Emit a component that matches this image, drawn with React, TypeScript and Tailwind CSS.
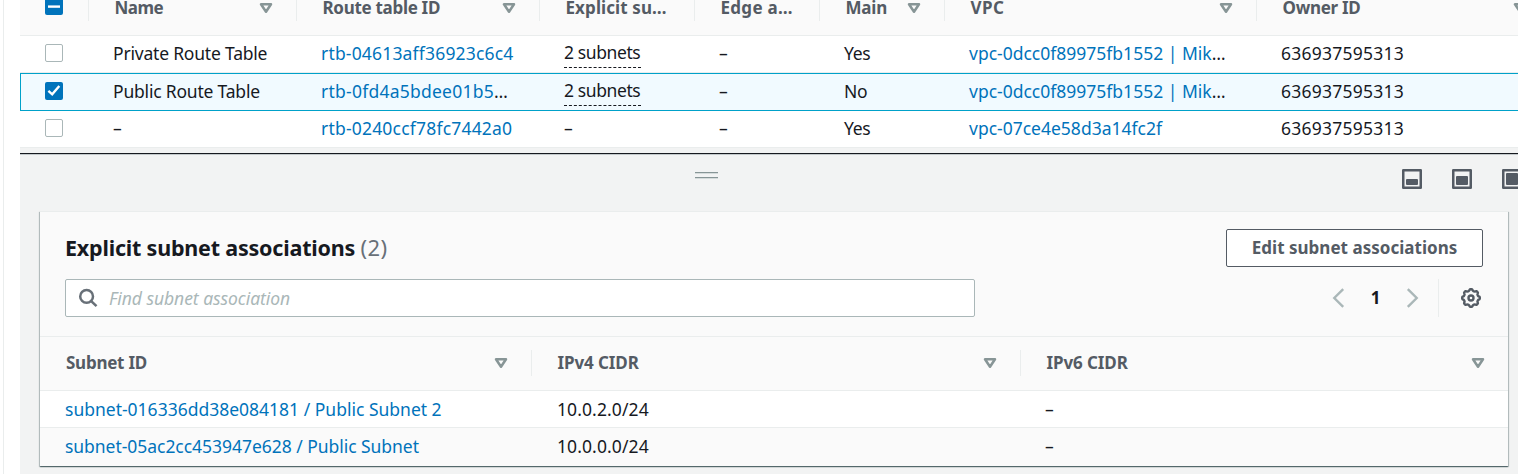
import type { ReactNode } from "react";

function SortIcon() {
  return (
    <svg viewBox="0 0 16 16" className="h-5 w-5 shrink-0" fill="none" stroke="#879596" strokeWidth="2" strokeLinejoin="round">
      <path d="M4 5h8l-4 6-4-6z" />
    </svg>
  );
}

function PanelSizeIcon({ y, height }: { y: number; height: number }) {
  return (
    <svg viewBox="0 0 20 20" className="h-5 w-5 shrink-0" fill="none">
      <rect x="1.25" y="1.25" width="17.5" height="17.5" stroke="#545b64" strokeWidth="2.5" strokeLinejoin="round" />
      <rect x="4" y={y} width="12" height={height} rx="1" fill="#545b64" />
    </svg>
  );
}

function gearPath() {
  const points: string[] = [];
  for (let i = 0; i < 96; i++) {
    const a = (i / 96) * Math.PI * 2;
    const r = 8.05 + 0.8 * Math.tanh(2 * Math.cos(8 * a));
    points.push(`${(10 + r * Math.sin(a)).toFixed(2)} ${(10 - r * Math.cos(a)).toFixed(2)}`);
  }
  return `M${points.join("L")}z`;
}

function GearIcon() {
  return (
    <svg viewBox="0 0 20 20" className="h-5 w-5 shrink-0" fill="none" stroke="#545b64" strokeWidth="2.4">
      <path d={gearPath()} strokeLinejoin="round" />
      <circle cx="10" cy="10" r="2.5" />
    </svg>
  );
}

function Checkbox({ state }: { state: "off" | "on" | "mixed" }) {
  if (state === "off") {
    return <span className="block h-[18px] w-[18px] rounded-[2px] border border-[#aab7b8] bg-white" />;
  }
  return (
    <span className="block h-[18px] w-[18px] rounded-[2px] bg-[#0073bb]">
      <svg viewBox="0 0 18 18" className="block h-[18px] w-[18px]" fill="none" stroke="#fff" strokeWidth="2.4">
        {state === "on" ? <path d="M3.4 8.9 7.2 12.3 14.3 4" /> : <path d="M3 9.6h12" />}
      </svg>
    </span>
  );
}

function HeadCell({ label, tracking, sort = true, divider = true }: { label: string; tracking: string; sort?: boolean; divider?: boolean }) {
  return (
    <div className={`flex h-[26px] items-center justify-between pl-[25.5px] pr-5 ${divider ? "border-r border-[#eaeded]" : ""}`}>
      <span className={`text-[17px] font-bold leading-4 text-[#545b64] ${tracking}`}>{label}</span>
      {sort && <SortIcon />}
    </div>
  );
}

const topGrid = "grid grid-cols-[69px_208px_243px_155px_125px_125px_312px_293px] w-[1530px]";
const cardGrid = "grid grid-cols-[492px_489px_487px]";

type Route = {
  name: string;
  id: string;
  idTracking: string;
  nameTracking: string;
  idCut?: boolean;
  subnets?: boolean;
  main: string;
  mainTracking: string;
  vpc: string;
  vpcTracking: string;
  vpcCut?: boolean;
};

const routes: Route[] = [
  { name: "Private Route Table", nameTracking: "tracking-[-0.2px]", id: "rtb-04613aff36923c6c4", idTracking: "tracking-[0.18px]", subnets: true, main: "Yes", mainTracking: "tracking-[-0.3px]", vpc: "vpc-0dcc0f89975fb1552 | Mik", vpcTracking: "tracking-normal", vpcCut: true },
  { name: "Public Route Table", nameTracking: "tracking-[-0.2px]", id: "rtb-0fd4a5bdee01b5", idTracking: "tracking-[0.24px]", idCut: true, subnets: true, main: "No", mainTracking: "tracking-[-0.4px]", vpc: "vpc-0dcc0f89975fb1552 | Mik", vpcTracking: "tracking-normal", vpcCut: true },
  { name: "–", nameTracking: "", id: "rtb-0240ccf78fc7442a0", idTracking: "tracking-[0.2px]", main: "Yes", mainTracking: "tracking-[-0.3px]", vpc: "vpc-07ce4e58d3a14fc2f", vpcTracking: "tracking-normal" },
];

function Cell({ children, className = "" }: { children: ReactNode; className?: string }) {
  return <div className={`pb-0.5 pl-6 whitespace-nowrap ${className}`}>{children}</div>;
}

function RouteRow({ route, index }: { route: Route; index: number }) {
  const selected = index === 1;
  const frame = selected
    ? "h-[38px] border-y border-l border-[#00a1c9] bg-[#f1faff]"
    : "h-[37px] border-b border-[#eaeded] bg-white pl-px";
  return (
    <div className={`${frame} w-[1530px] overflow-hidden`}>
      <div className={`${topGrid} -ml-px h-9 items-center`}>
        <div className={selected ? "pb-[3px] pl-[25px]" : "pb-0.5 pl-[25px]"}>
          <Checkbox state={selected ? "on" : "off"} />
        </div>
        <Cell className={route.nameTracking}>{route.name}</Cell>
        <Cell className={route.idTracking}>
          <span className="text-[#0073bb]">{route.id}</span>
          {route.idCut && "…"}
        </Cell>
        <Cell>
          {route.subnets ? (
            <span className="mt-px block h-7 w-[77px] border-b border-dashed border-[#16191f] leading-6 tracking-[-0.4px]">2 subnets</span>
          ) : (
            "–"
          )}
        </Cell>
        <Cell>–</Cell>
        <Cell className={route.mainTracking}>{route.main}</Cell>
        <Cell className={route.vpcTracking}>
          <span className="text-[#0073bb]">{route.vpc}</span>
          {route.vpcCut && "…"}
        </Cell>
        <Cell className="tracking-[0.25px]">636937595313</Cell>
      </div>
    </div>
  );
}

function RouteTable() {
  return (
    <div className="h-[148px] shrink-0 overflow-hidden">
      <div className="h-9 overflow-hidden border-b border-[#eaeded] bg-[#fafafa]">
        <div className={`${topGrid} -mt-[5px]`}>
          <div className="h-[26px] border-r border-[#eaeded] pl-[25px] pt-0.5">
            <Checkbox state="mixed" />
          </div>
          <HeadCell label="Name" tracking="tracking-[-0.5px]" />
          <HeadCell label="Route table ID" tracking="tracking-[-0.3px]" />
          <HeadCell label="Explicit su…" tracking="tracking-[0.1px]" sort={false} />
          <HeadCell label="Edge a…" tracking="tracking-[0.3px]" sort={false} />
          <HeadCell label="Main" tracking="tracking-[-0.2px]" />
          <HeadCell label="VPC" tracking="tracking-[0.4px]" />
          <HeadCell label="Owner ID" tracking="tracking-[-0.3px]" divider={false} />
        </div>
      </div>
      {routes.map((route, index) => (
        <RouteRow key={route.id} route={route} index={index} />
      ))}
    </div>
  );
}

function SplitBar() {
  return (
    <div className="flex h-[58px] shrink-0 border-t border-[#16191f] shadow-[inset_0_1px_0_#c3c9cb]">
      <div className="ml-[675px] mt-[18px] flex h-[7px] w-[23px] shrink-0 flex-col justify-between">
        <span className="block h-0.5 border-t border-[#879596] bg-[#d5dbdb]" />
        <span className="block h-0.5 border-t border-[#879596] bg-[#d5dbdb]" />
      </div>
      <div className="ml-[684px] mt-[15px] flex shrink-0 gap-[30px]">
        <PanelSizeIcon y={10} height={6} />
        <PanelSizeIcon y={7} height={9} />
        <PanelSizeIcon y={4} height={12} />
      </div>
    </div>
  );
}

function AssociationsCard() {
  return (
    <section className="ml-5 h-[255px] w-[1468px] shrink-0 border-t border-[#eaeded] bg-[#fafafa] shadow-[0_1px_1px_0_rgba(0,28,36,0.45),1px_1px_1px_0_rgba(0,28,36,0.2),-1px_1px_1px_0_rgba(0,28,36,0.2)]">
      <div className="flex h-[125px] flex-col border-b border-[#eaeded] pl-[25px] pr-[25px] pt-[17px]">
        <div className="flex h-[38px] items-center justify-between">
          <h2 className="whitespace-nowrap pb-0.5 text-[21.5px] font-bold tracking-[-0.2px] text-[#16191f]">
            Explicit subnet associations <span className="text-[22px] font-normal tracking-[0.4px] text-[#687078]">(2)</span>
          </h2>
          <button className="h-[38px] w-[257px] rounded-[2px] border border-[#545b64] bg-white text-[17px] font-bold tracking-[0.02px] text-[#545b64]">
            Edit subnet associations
          </button>
        </div>
        <div className="mt-3 flex h-[38px] items-center">
          <div className="flex h-[38px] w-[910px] items-center rounded-[2px] border border-[#aab7b8] bg-white pl-3">
            <svg viewBox="0 0 20 20" className="h-5 w-5" fill="none" stroke="#687078" strokeWidth="2.5">
              <circle cx="8.6" cy="8.4" r="6.4" />
              <path d="m13.2 13.1 5.3 5.1" />
            </svg>
            <span className="ml-[11px] italic tracking-[-0.05px] text-[#aab7b8]">Find subnet association</span>
          </div>
          <div className="ml-auto flex h-[38px] items-center">
            <svg viewBox="0 0 20 20" className="h-5 w-5" fill="none" stroke="#aab7b8" strokeWidth="2.4">
              <path d="M15.2 1.2 6.3 10l8.9 8.8" />
            </svg>
            <span className="w-[55px] text-center text-[17px] font-bold text-[#16191f]">1</span>
            <svg viewBox="0 0 20 20" className="h-5 w-5" fill="none" stroke="#aab7b8" strokeWidth="2.4">
              <path d="M4.8 1.2 13.7 10l-8.9 8.8" />
            </svg>
            <span className="ml-[15px] mr-[22px] h-[38px] w-px bg-[#eaeded]" />
            <span className="mr-0.5">
              <GearIcon />
            </span>
          </div>
        </div>
      </div>
      <div className={`${cardGrid} h-[54px] border-b border-[#eaeded] pt-[13px]`}>
        <div className="[&>div]:pl-[26px]">
          <HeadCell label="Subnet ID" tracking="tracking-[-0.25px]" />
        </div>
        <HeadCell label="IPv4 CIDR" tracking="tracking-[-0.1px]" />
        <HeadCell label="IPv6 CIDR" tracking="tracking-[-0.1px]" divider={false} />
      </div>
      <div className={`${cardGrid} h-[37px] items-center border-b border-[#eaeded] bg-white`}>
        <div className="pl-[25px] text-[#0073bb]">subnet-016336dd38e084181 / Public Subnet 2</div>
        <div className="pl-[25px] tracking-[0.1px]">10.0.2.0/24</div>
        <div className="pl-6">–</div>
      </div>
      <div className={`${cardGrid} h-9 items-center`}>
        <div className="pl-[25px] tracking-[-0.04px] text-[#0073bb]">subnet-05ac2cc453947e628 / Public Subnet</div>
        <div className="pl-[25px] tracking-[0.1px]">10.0.0.0/24</div>
        <div className="pl-6">–</div>
      </div>
    </section>
  );
}

export default function App() {
  return (
    <div className="flex h-[474px] w-[1518px] overflow-hidden bg-white pl-[3px] font-['Noto_Sans','Open_Sans',sans-serif] text-[17.5px] leading-6 text-[#16191f]">
      <div className="w-[17px] shrink-0 border-l border-[#eaeded]" />
      <main className="flex w-[1498px] flex-col overflow-hidden bg-[#f2f3f3]">
        <RouteTable />
        <div className="h-[5px] shrink-0" />
        <SplitBar />
        <AssociationsCard />
      </main>
    </div>
  );
}
